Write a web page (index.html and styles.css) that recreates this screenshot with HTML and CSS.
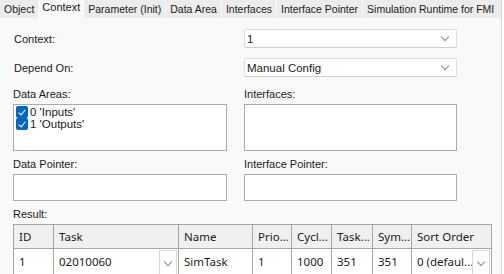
FILE: index.html
```html
<!DOCTYPE html>
<html lang="en">
<head>
    <meta charset="UTF-8">
    <title>Context</title>
    <link rel="stylesheet" href="styles.css">
</head>
<body>
    <div class="window">
        <!-- Tabs -->
        <div class="tabs">
            <div class="tab">Object</div>
            <div class="tab active">Context</div>
            <div class="tab">Parameter (Init)</div>
            <div class="tab">Data Area</div>
            <div class="tab">Interfaces</div>
            <div class="tab">Interface Pointer</div>
            <div class="tab">Simulation Runtime for FMI</div>
        </div>

        <div class="panel">
            <div class="pair row-select">
                <div class="label">Context:</div>
                <div class="select"><span>1</span><span class="chev"></span></div>
            </div>
            <div class="pair row-select second">
                <div class="label">Depend On:</div>
                <div class="select"><span>Manual Config</span><span class="chev"></span></div>
            </div>

            <div class="pair group">
                <div>
                    <div class="label">Data Areas:</div>
                    <div class="listbox">
                        <div class="item"><span class="check"></span>0 'Inputs'</div>
                        <div class="item"><span class="check"></span>1 'Outputs'</div>
                    </div>
                </div>
                <div>
                    <div class="label">Interfaces:</div>
                    <div class="listbox"></div>
                </div>
            </div>

            <div class="pair group small">
                <div>
                    <div class="label">Data Pointer:</div>
                    <div class="textbox"></div>
                </div>
                <div>
                    <div class="label">Interface Pointer:</div>
                    <div class="textbox"></div>
                </div>
            </div>

            <div class="label result">Result:</div>
            <table class="grid">
                <colgroup>
                    <col class="c-id"><col class="c-task"><col class="c-name"><col class="c-prio">
                    <col class="c-cycl"><col class="c-tsk"><col class="c-sym"><col class="c-sort">
                </colgroup>
                <tr>
                    <th>ID</th><th>Task</th><th>Name</th><th>Prio...</th><th>Cycl...</th><th>Task...</th><th>Sym...</th><th>Sort Order</th>
                </tr>
                <tr>
                    <td>1</td>
                    <td class="combo"><span>02010060</span><span class="drop"><span class="chev"></span></span></td>
                    <td>SimTask</td>
                    <td>1</td>
                    <td>1000</td>
                    <td>351</td>
                    <td>351</td>
                    <td class="combo"><span>0 (defaul...</span><span class="drop"><span class="chev"></span></span></td>
                </tr>
            </table>
        </div>
    </div>
</body>
</html>
```

FILE: styles.css
```css
body {
    margin: 0;
    background: #ffffff;
    font-family: "Liberation Sans", Arial, sans-serif;
    font-size: 11px;
    color: #1a1a1a;
}

.window {
    width: 501px;
    height: 274px;
    overflow: hidden;
    border-right: 1px solid #d4d4d4;
    background: #f9f9f9;
}

/* Tabs */
.tabs {
    display: flex;
    height: 18px;
    gap: 1px;
    background: #f9f9f9;
}

.tab {
    padding: 0 4px;
    height: 18px;
    line-height: 19px;
    font-size: 10.5px;
    background: #ececec;
    white-space: nowrap;
}

.tab.active {
    background: #f9f9f9;
    line-height: 14px;
    font-size: 11px;
    padding: 0 3px;
}

.tab:last-child {
    flex: 1;
}

/* Contenido */
.panel {
    padding: 11px 0 0 13px;
}

.pair {
    display: grid;
    grid-template-columns: 214px 213px;
    column-gap: 17px;
}

.row-select {
    height: 19px;
    align-items: center;
}

.row-select.second {
    margin-top: 10px;
}

.row-select .label {
    padding-left: 1px;
}

.select {
    height: 17px;
    background: #ffffff;
    border: 1px solid #dcdcdc;
    border-bottom-color: #cfcfcf;
    border-radius: 2px;
    display: flex;
    align-items: center;
    justify-content: space-between;
    padding: 0 8px 0 2px;
    font-size: 11.5px;
}

.chev {
    width: 5px;
    height: 5px;
    border-right: 1px solid #8a8a8a;
    border-bottom: 1px solid #8a8a8a;
    transform: rotate(45deg);
    margin-top: -3px;
}

.group {
    margin-top: 8px;
}

.group .label,
.label.result {
    height: 19px;
    line-height: 19px;
}

.group.small {
    margin-top: 4px;
}

.listbox {
    height: 44px;
    background: #ffffff;
    border: 1px solid #ababab;
    padding-top: 1px;
}

.item {
    display: flex;
    align-items: center;
    height: 12px;
    line-height: 12px;
    font-size: 11.5px;
    padding-left: 2px;
}

.check {
    width: 12px;
    height: 12px;
    background: #0067c0;
    border-radius: 2px;
    margin-right: 2px;
    position: relative;
}

.check::after {
    content: "";
    position: absolute;
    left: 4px;
    top: 2px;
    width: 3px;
    height: 6px;
    border-right: 1px solid #ffffff;
    border-bottom: 1px solid #ffffff;
    transform: rotate(40deg);
}

.textbox {
    height: 25px;
    background: #ffffff;
    border: 1px solid #ababab;
}

.label.result {
    margin-top: 4px;
}

/* Tabla de resultados */
.grid {
    border-collapse: collapse;
    table-layout: fixed;
    width: 478px;
    font-family: "Noto Sans", sans-serif;
    font-size: 11.5px;
    color: #1a1a1a;
}

.c-id { width: 40px; }
.c-task { width: 125px; }
.c-name { width: 74px; }
.c-prio { width: 39px; }
.c-cycl { width: 40px; }
.c-tsk { width: 41px; }
.c-sym { width: 39px; }
.c-sort { width: 80px; }

.grid th,
.grid td {
    border: 1px solid #a6a6a6;
    text-align: left;
    font-weight: normal;
    padding: 0 0 0 5px;
    white-space: nowrap;
    overflow: hidden;
}

.grid th {
    height: 23px;
    background: #f0f0f0;
}

.grid td {
    height: 25px;
    background: #ffffff;
}

.combo {
    position: relative;
}

.combo .drop {
    position: absolute;
    right: 1px;
    top: 1px;
    width: 16px;
    height: 24px;
    border: 1px solid #d6d6d6;
    background: #ffffff;
    display: flex;
    align-items: center;
    justify-content: center;
}
```
